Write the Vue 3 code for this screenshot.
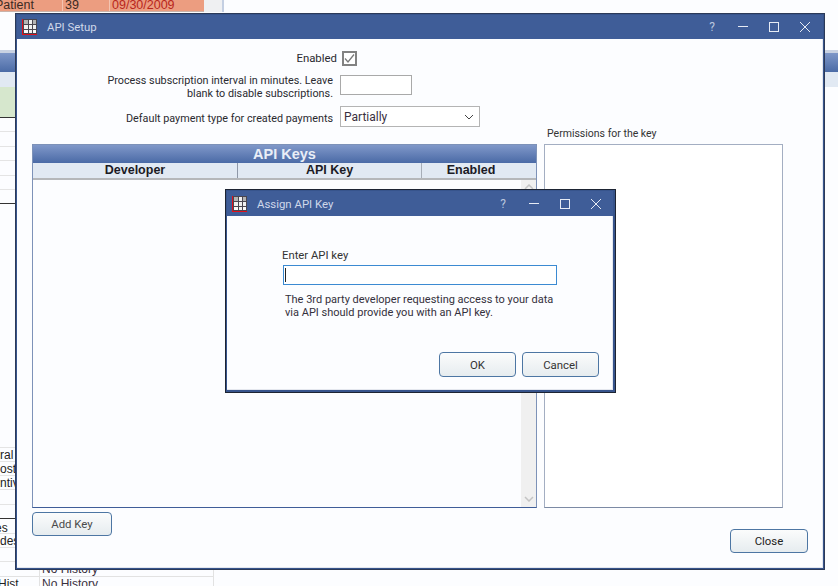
<script setup>
const leftRows = [131, 146, 160, 175, 189, 447, 461, 475, 489, 504, 533, 547, 561]
const columns = [
  { name: 'Developer', cls: 'col-dev' },
  { name: 'API Key', cls: 'col-key' },
  { name: 'Enabled', cls: 'col-en' }
]
</script>

<template>
  <div class="desktop">
    <!-- background application, mostly hidden -->
    <div class="bg-top">
      <div class="bg-row">
        <span class="c1">Patient</span><span class="c2">39</span><span class="c3">09/30/2009</span>
      </div>
      <div class="bg-gutter"></div>
    </div>
    <div class="bg-head bg-head-left"></div>
    <div class="bg-sub bg-sub-left"></div>
    <div class="bg-green"></div>
    <div
      v-for="top in leftRows"
      :key="top"
      class="bg-line"
      :style="{ top: top + 'px' }"
    ></div>
    <div class="bg-dark" style="top: 117px"></div>
    <div class="bg-dark" style="top: 203px"></div>
    <div class="bg-dark" style="top: 518px"></div>
    <div class="bg-word" style="top: 448px">ral</div>
    <div class="bg-word" style="top: 462px">ost</div>
    <div class="bg-word" style="top: 476px">ntiv</div>
    <div class="bg-word cut" style="top: 521px">es</div>
    <div class="bg-word" style="top: 534px">des</div>
    <div class="bg-table">
      <div class="bg-t-row"><span class="t1"></span><span class="t2">No History</span></div>
      <div class="bg-t-row"><span class="t1">Hist</span><span class="t2">No History</span></div>
    </div>
    <div class="bg-head bg-head-right"></div>
    <div class="bg-sub bg-sub-right"></div>

    <!-- API Setup window -->
    <section class="window setup">
      <header class="titlebar">
        <svg class="app-icon" viewBox="0 0 15 16" width="15" height="16">
          <rect width="15" height="16" fill="#e0101c" />
          <rect x="1" y="0" width="14" height="15" fill="#4a4650" />
          <g fill="#b4b4b4">
            <rect x="2" y="1" width="4" height="4" />
            <rect x="11" y="1" width="3" height="4" />
          </g>
          <g fill="#f0f0f0">
            <rect x="7" y="1" width="3" height="4" />
            <rect x="2" y="6" width="4" height="4" /><rect x="7" y="6" width="3" height="4" /><rect x="11" y="6" width="3" height="4" />
            <rect x="7" y="11" width="3" height="3" />
          </g>
          <g fill="#fafafa">
            <rect x="2" y="11" width="4" height="3" /><rect x="11" y="11" width="3" height="3" />
          </g>
        </svg>
        <span class="title">API Setup</span>
        <div class="controls">
          <span class="help">?</span>
          <svg width="10" height="10" viewBox="0 0 10 10"><path d="M0 4.5H10" stroke="#e6ebf4" fill="none" /></svg>
          <svg width="10" height="10" viewBox="0 0 10 10"><rect x=".5" y=".5" width="9" height="9" stroke="#e6ebf4" fill="none" /></svg>
          <svg width="10" height="10" viewBox="0 0 10 10"><path d="M0 0L10 10M10 0L0 10" stroke="#e6ebf4" fill="none" /></svg>
        </div>
      </header>
      <div class="setup-body">
        <div class="top">
          <div class="form">
            <label class="lbl one">Enabled</label>
            <span class="checkbox">
              <svg width="11" height="11" viewBox="0 0 11 11"><path d="M1 5.5L4 9L10 1.5" stroke="#7a7a7a" stroke-width="1.3" fill="none" /></svg>
            </span>
            <label class="lbl two">Process subscription interval in minutes. Leave<br />blank to disable subscriptions.</label>
            <span class="textbox"></span>
            <label class="lbl three">Default payment type for created payments</label>
            <span class="select">
              <span>Partially</span>
              <svg width="10" height="6" viewBox="0 0 10 6"><path d="M1 1L5 5L9 1" stroke="#444" fill="none" /></svg>
            </span>
          </div>
          <div class="perm-label">Permissions for the key</div>
        </div>
        <div class="panels">
          <div class="keys">
            <div class="keys-title">API Keys</div>
            <div class="keys-head">
              <span v-for="c in columns" :key="c.name" :class="['col', c.cls]">{{ c.name }}</span>
            </div>
            <div class="keys-list">
              <div class="scrollbar">
                <svg width="10" height="6" viewBox="0 0 10 6"><path d="M1 5L5 1L9 5" stroke="#c4c4c4" stroke-width="1.5" fill="none" /></svg>
                <svg width="10" height="6" viewBox="0 0 10 6"><path d="M1 1L5 5L9 1" stroke="#c4c4c4" stroke-width="1.5" fill="none" /></svg>
              </div>
            </div>
          </div>
          <div class="perm-box"></div>
        </div>
        <div class="footer">
          <button class="btn add">Add Key</button>
          <button class="btn close">Close</button>
        </div>
      </div>
    </section>

    <!-- Assign API Key dialog -->
    <section class="window dialog">
      <header class="titlebar dlg-bar">
        <svg class="app-icon" viewBox="0 0 15 16" width="15" height="16">
          <rect width="15" height="16" fill="#e0101c" />
          <rect x="1" y="0" width="14" height="15" fill="#4a4650" />
          <g fill="#b4b4b4">
            <rect x="2" y="1" width="4" height="4" />
            <rect x="11" y="1" width="3" height="4" />
          </g>
          <g fill="#f0f0f0">
            <rect x="7" y="1" width="3" height="4" />
            <rect x="2" y="6" width="4" height="4" /><rect x="7" y="6" width="3" height="4" /><rect x="11" y="6" width="3" height="4" />
            <rect x="7" y="11" width="3" height="3" />
          </g>
          <g fill="#fafafa">
            <rect x="2" y="11" width="4" height="3" /><rect x="11" y="11" width="3" height="3" />
          </g>
        </svg>
        <span class="title">Assign API Key</span>
        <div class="controls">
          <span class="help">?</span>
          <svg width="10" height="10" viewBox="0 0 10 10"><path d="M0 4.5H10" stroke="#e6ebf4" fill="none" /></svg>
          <svg width="10" height="10" viewBox="0 0 10 10"><rect x=".5" y=".5" width="9" height="9" stroke="#e6ebf4" fill="none" /></svg>
          <svg width="10" height="10" viewBox="0 0 10 10"><path d="M0 0L10 10M10 0L0 10" stroke="#e6ebf4" fill="none" /></svg>
        </div>
      </header>
      <div class="dlg-body">
        <div class="dlg-label">Enter API key</div>
        <div class="dlg-input"><i class="caret"></i></div>
        <p class="dlg-text">The 3rd party developer requesting access to your data<br />via API should provide you with an API key.</p>
        <div class="dlg-actions">
          <button class="btn ok">OK</button>
          <button class="btn ok">Cancel</button>
        </div>
      </div>
    </section>
  </div>
</template>

<style>
html, body { margin: 0; background: #fff; }
</style>

<style scoped>
.desktop {
  position: relative;
  width: 838px;
  height: 586px;
  overflow: hidden;
  background: #fcfdff;
  font-family: Roboto, "Liberation Sans", Arial, sans-serif;
  font-size: 11px;
  color: #222;
}

/* background app */
.bg-top { position: absolute; left: 0; top: 0; display: flex; height: 12px; }
.bg-row {
  width: 204px; height: 11px; background: #ec9d80;
  border-bottom: 1px solid #c9b3aa;
  display: flex; align-items: flex-end; overflow: hidden;
  font-family: "Liberation Sans", Arial, sans-serif;
  font-size: 12.5px;
}
.bg-row span { display: block; height: 11px; line-height: 10px; box-sizing: border-box; border-right: 1px solid #f3c4b1; }
.c1 { width: 63px; text-indent: -5px; color: #3c2a22; }
.c2 { width: 47px; padding-left: 2px; color: #3c2a22; }
.c3 { width: 94px; padding-left: 2px; color: #b8261c; border-right: 0 !important; }
.bg-gutter { width: 18px; height: 12px; background: #eff0f2; border-right: 2px solid #c4cfe2; }
.bg-head { position: absolute; top: 50px; height: 22px; box-sizing: border-box; border-top: 3px solid #c9d2e2; background: linear-gradient(#7e97c8, #4b6ba6); }
.bg-sub { position: absolute; top: 72px; height: 15px; background: #e1e9f3; }
.bg-head-left, .bg-sub-left { left: 0; width: 15px; }
.bg-head-right, .bg-sub-right { left: 825px; width: 13px; }
.bg-green { position: absolute; left: 0; top: 87px; width: 15px; height: 30px; background: #d6e7cd; }
.bg-line { position: absolute; left: 0; width: 15px; height: 1px; background: #e4e4e4; }
.bg-dark { position: absolute; left: 0; width: 15px; height: 1px; background: #333; }
.bg-word {
  position: absolute; left: 0; width: 15px; overflow: hidden; white-space: nowrap;
  font-family: "Liberation Sans", Arial, sans-serif; font-size: 12px; line-height: 14px; color: #222;
}
.bg-word.cut { text-indent: -5px; }
.bg-table { position: absolute; left: 0; top: 562px; width: 214px; box-sizing: border-box; border-right: 1px solid #e2e2e2; font-family: "Liberation Sans", Arial, sans-serif; font-size: 12px; }
.bg-t-row { display: flex; height: 14px; border-bottom: 1px solid #e2e2e2; line-height: 14px; }
.t1 { width: 39px; border-right: 1px solid #e2e2e2; text-indent: -2px; overflow: hidden; }
.t2 { padding-left: 2px; color: #3a3040; }

/* windows */
.window {
  position: absolute;
  box-sizing: border-box;
  display: flex;
  flex-direction: column;
  background: #fcfdff;
  border: 2px solid #37548c;
  outline: 1px solid #2c3a58;
  outline-offset: -1px;
  box-shadow: inset 0 -1px 0 #e4e7ee, inset -1px 0 0 #e4e7ee;
}
.setup { left: 15px; top: 13px; width: 810px; height: 557px; }
.dialog {
  left: 225px; top: 189px; width: 391px; height: 204px;
  border-right-width: 3px; border-bottom-width: 3px;
  outline-color: #1d2433;
}

.titlebar {
  flex: none;
  display: flex;
  align-items: center;
  height: 24px;
  background: #3f5d98;
  padding-left: 5px;
  color: #cfd8ea;
  font-size: 11.4px;
}
.dlg-bar { height: 25px; }
.title { margin-left: 10px; }
.app-icon { flex: none; }
.controls {
  margin-left: auto;
  margin-right: 13px;
  display: flex;
  align-items: center;
  gap: 21px;
}
.dlg-bar .controls { margin-right: 12px; }
.help { width: 8px; margin-right: 1px; color: #b9c6de; font-size: 12px; text-align: center; }

/* setup body */
.setup-body { flex: 1; display: flex; flex-direction: column; padding: 0 15px; min-height: 0; }
.top { height: 105px; display: flex; position: relative; }
.form {
  width: 463px;
  padding-top: 12px;
  box-sizing: border-box;
  display: grid;
  grid-template-columns: 301px 1fr;
  grid-auto-rows: min-content;
  column-gap: 7px;
  align-items: start;
}
.lbl { text-align: right; line-height: 13px; color: #2a2a30; font-size: 10.8px; }
.lbl.one { margin: 1px -4px 0 0; font-size: 11.4px; }
.lbl.two { margin-top: 8px; }
.lbl.three { margin-top: 12px; }
.checkbox {
  width: 11px; height: 11px;
  margin-left: 2px;
  border: 2px solid #828282;
  background: #fff;
  display: flex; align-items: center; justify-content: center;
}
.textbox {
  width: 70px; height: 18px;
  margin-top: 9px;
  border: 1px solid #a9a9a9;
  background: #fff;
}
.select {
  width: 130px; height: 19px;
  margin-top: 6px;
  border: 1px solid #b4b4b4;
  background: #fff;
  display: flex; align-items: center; justify-content: space-between;
  padding: 0 5px 0 3px;
  color: #3a3040;
  font-size: 12px;
}
.perm-label { position: absolute; left: 515px; top: 88px; color: #333; line-height: 13px; font-size: 10.5px; }

.panels { flex: none; display: flex; gap: 7px; height: 364px; }
.keys {
  width: 505px;
  box-sizing: border-box;
  display: flex;
  flex-direction: column;
  border: 1px solid #7d92b8;
  border-bottom-color: #3f5d98;
}
.keys-title {
  flex: none; height: 18px;
  background: linear-gradient(#8098c9, #4a6aa6);
  color: #e9eef7;
  text-align: center;
  font-family: "Liberation Sans", Arial, sans-serif;
  font-weight: bold;
  font-size: 14.5px;
  line-height: 19px;
}
.keys-head {
  flex: none;
  display: flex;
  height: 15px;
  background: #e1e9f3;
  border-bottom: 2px solid #b5b7ba;
  font-family: "Liberation Sans", Arial, sans-serif;
  font-weight: bold;
  font-size: 12.5px;
  line-height: 15px;
  color: #1b1b25;
}
.col { text-align: center; box-sizing: border-box; }
.col-dev { width: 205px; border-right: 1px solid #8f98a8; }
.col-key { width: 184px; border-right: 1px solid #a7aeb8; }
.col-en { width: 98px; }
.keys-list { flex: 1; display: flex; justify-content: flex-end; min-height: 0; background: #fcfdff; }
.scrollbar {
  width: 15px;
  background: #f0f0f0;
  display: flex;
  flex-direction: column;
  justify-content: space-between;
  align-items: center;
  padding: 4px 0 5px;
  box-sizing: border-box;
}
.perm-box {
  width: 239px;
  box-sizing: border-box;
  background: #fff;
  border: 1px solid #a3aec2;
  border-bottom-color: #7c8aa4;
}

.footer { display: flex; justify-content: space-between; align-items: flex-start; padding-top: 4px; }
.btn {
  box-sizing: border-box;
  border: 1px solid #4d76a3;
  border-radius: 4px;
  background: linear-gradient(#fbfcfc, #e6ecef);
  font-family: inherit;
  font-size: 11.4px;
  color: #333;
  padding: 0;
}
.add { width: 80px; height: 24px; color: #4a4a4a; }
.close { width: 78px; height: 24px; margin-top: 17px; color: #222; }

/* dialog body */
.dlg-body {
  flex: 1;
  display: flex;
  flex-direction: column;
  padding: 33px 14px 0 55px;
}
.dlg-label { line-height: 14px; color: #333; font-size: 11.3px; }
.dlg-input {
  width: 274px; height: 20px;
  box-sizing: border-box;
  margin: 2px 0 0 1px;
  border: 1px solid #3b8ad2;
  background: #fff;
  display: flex;
  align-items: center;
  padding-left: 1px;
}
.caret { display: block; width: 1px; height: 14px; background: #222; }
.dlg-text { margin: 8px 0 0 3px; line-height: 13px; color: #34303c; }
.dlg-actions { margin-top: auto; margin-bottom: 13px; display: flex; justify-content: flex-end; gap: 6px; }
.ok { width: 77px; height: 25px; }
</style>
